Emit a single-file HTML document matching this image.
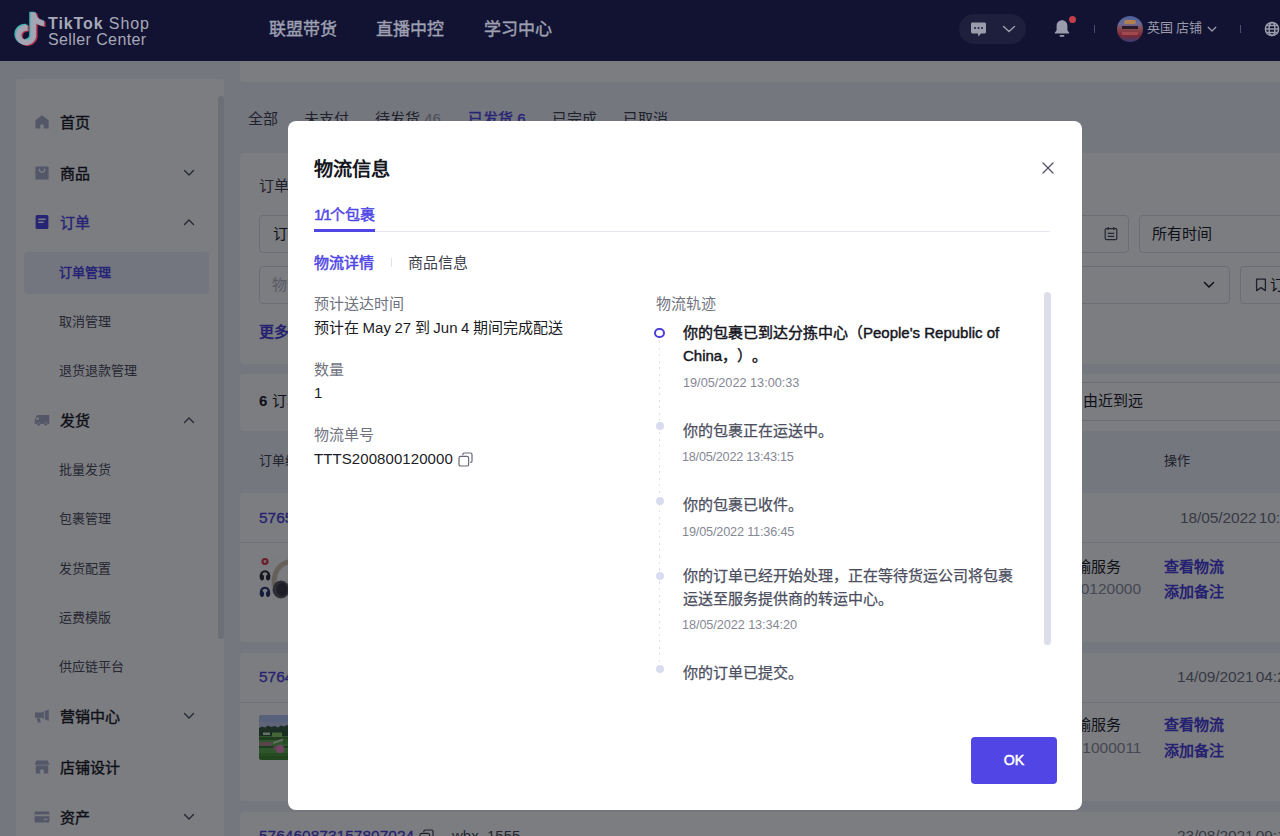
<!DOCTYPE html>
<html lang="zh-CN">
<head>
<meta charset="utf-8">
<title>TikTok Shop Seller Center</title>
<style>
*{box-sizing:border-box;margin:0;padding:0}
html,body{width:1280px;height:836px;overflow:hidden}
body{font-family:"Liberation Sans",sans-serif;background:#eceef6;color:#1b1c25;position:relative;-webkit-font-smoothing:antialiased}
.abs{position:absolute;white-space:nowrap}
#page{position:absolute;left:0;top:0;width:1280px;height:836px;overflow:hidden;background:#f0f2fb;text-spacing-trim:space-all}
/* header */
#hdr{position:absolute;left:0;top:0;width:1280px;height:61px;background:#121332;z-index:5}
#hdr .nav{position:absolute;top:17.5px;font-size:17px;line-height:24px;color:#9fa0b2;-webkit-text-stroke:0.4px #9fa0b2;white-space:nowrap}
.logotxt{position:absolute;left:48px;color:#a8a9b8;white-space:nowrap;font-size:16px;line-height:18px}
/* sidebar */
#side{position:absolute;left:16px;top:79px;width:208px;height:800px;background:#fff;border-radius:4px}
#side .sb{position:absolute;left:202px;top:17px;width:6px;height:543px;background:#dfe1e8;border-radius:3px}
.mi{margin-top:1px;position:absolute;left:44px;font-size:15px;line-height:20px;-webkit-text-stroke:0.4px currentColor;color:#1a1b25;white-space:nowrap}
.si{margin-top:.5px;position:absolute;left:43px;font-size:13px;line-height:18px;color:#4a4c59;white-space:nowrap}
.ico{position:absolute;left:18px;width:16px;height:16px}
#side .sel{position:absolute;left:8px;top:173px;width:185px;height:42px;background:#eef0fb;border-radius:4px}
.chev{position:absolute;left:167px;width:12px;height:8px}
/* main */
.card{position:absolute;background:#fff;border-radius:4px}
.tab{position:absolute;top:108px;font-size:15px;line-height:22px;color:#3e404d;white-space:nowrap}
.inp{position:absolute;border:1px solid #dcdee6;border-radius:4px;background:#fff;height:38px}
.lnk{color:#4a3fdb;font-weight:700}
/* overlay + modal */
#mask{z-index:3;position:absolute;left:0;top:0;width:1280px;height:836px;background:rgba(4,6,14,0.52)}
#modal{z-index:4;position:absolute;left:288px;top:121px;width:794px;height:689px;background:#fff;border-radius:8px;color:#1b1c25}
#modal .t{position:absolute;white-space:nowrap}
.g{color:#70737f}
.tl-t{position:absolute;left:395px;font-size:15px;line-height:22.5px;color:#4b4e5e;-webkit-text-stroke:0.25px #4b4e5e;white-space:nowrap}
.tl-d{position:absolute;left:394px;font-size:12.7px;line-height:16px;color:#858894;white-space:nowrap}
.dot{position:absolute;left:367.600px;margin-top:1px;width:8px;height:8px;border-radius:50%;background:#d9dbf0}
</style>
</head>
<body>
<div id="page">

<!-- HEADER -->
<div id="hdr">
  <svg class="abs" style="left:0;top:0" width="60" height="60" viewBox="0 0 60 60">
    <g transform="translate(13.650,12.500) scale(1.360)">
      <path d="M12.525.02c1.31-.02 2.61-.01 3.91-.02.08 1.53.63 3.09 1.75 4.170 1.120 1.110 2.700 1.620 4.240 1.790v4.030c-1.440-.05-2.890-.35-4.200-.97-.57-.26-1.100-.59-1.620-.93-.01 2.920.010 5.840-.02 8.750-.08 1.400-.54 2.790-1.350 3.940-1.310 1.920-3.580 3.170-5.910 3.210-1.430.08-2.860-.31-4.080-1.030-2.020-1.190-3.440-3.370-3.650-5.710-.02-.5-.03-1-.01-1.490.18-1.900 1.120-3.720 2.580-4.960 1.660-1.440 3.980-2.130 6.150-1.720.02 1.480-.04 2.960-.04 4.440-.99-.32-2.150-.23-3.020.37-.63.41-1.110 1.040-1.360 1.750-.21.51-.15 1.070-.14 1.610.24 1.640 1.820 3.020 3.500 2.870 1.120-.01 2.190-.66 2.770-1.610.19-.33.4-.67.41-1.060.1-1.790.06-3.570.07-5.360.01-4.030-.01-8.050.02-12.070z" fill="#3fb5b0" transform="translate(-1.050,-.6)"/>
      <path d="M12.525.02c1.31-.02 2.61-.01 3.91-.02.08 1.53.63 3.09 1.75 4.170 1.120 1.110 2.700 1.620 4.240 1.790v4.030c-1.440-.05-2.890-.35-4.200-.97-.57-.26-1.100-.59-1.620-.93-.01 2.920.010 5.840-.02 8.750-.08 1.400-.54 2.790-1.350 3.940-1.310 1.920-3.580 3.170-5.910 3.210-1.430.08-2.860-.31-4.080-1.030-2.020-1.190-3.440-3.370-3.650-5.710-.02-.5-.03-1-.01-1.490.18-1.900 1.120-3.720 2.580-4.960 1.660-1.440 3.980-2.130 6.150-1.720.02 1.480-.04 2.960-.04 4.440-.99-.32-2.150-.23-3.020.37-.63.41-1.110 1.040-1.360 1.750-.21.51-.15 1.070-.14 1.610.24 1.640 1.820 3.020 3.500 2.870 1.120-.01 2.190-.66 2.770-1.610.19-.33.4-.67.41-1.060.1-1.790.06-3.570.07-5.360.01-4.030-.01-8.050.02-12.070z" fill="#b8324c" transform="translate(1.050,.6)"/>
      <path d="M12.525.02c1.31-.02 2.61-.01 3.91-.02.08 1.53.63 3.09 1.75 4.170 1.120 1.110 2.700 1.620 4.240 1.790v4.030c-1.440-.05-2.890-.35-4.200-.97-.57-.26-1.100-.59-1.620-.93-.01 2.920.010 5.840-.02 8.750-.08 1.400-.54 2.790-1.350 3.940-1.310 1.920-3.580 3.170-5.910 3.210-1.430.08-2.860-.31-4.080-1.030-2.020-1.190-3.440-3.370-3.650-5.710-.02-.5-.03-1-.01-1.490.18-1.900 1.120-3.720 2.580-4.960 1.660-1.440 3.980-2.130 6.150-1.720.02 1.480-.04 2.960-.04 4.440-.99-.32-2.150-.23-3.020.37-.63.41-1.110 1.040-1.360 1.750-.21.51-.15 1.070-.14 1.610.24 1.640 1.820 3.020 3.500 2.870 1.120-.01 2.190-.66 2.770-1.610.19-.33.4-.67.41-1.060.1-1.790.06-3.570.07-5.360.01-4.030-.01-8.050.02-12.070z" fill="#a3a4b4"/>
    </g>
  </svg>
  <div class="logotxt" style="top:14.500px;letter-spacing:.9px"><b>TikTok</b> Shop</div>
  <div class="logotxt" style="top:30.500px;letter-spacing:.4px">Seller Center</div>
  <div class="nav" style="left:269px">联盟带货</div>
  <div class="nav" style="left:376px">直播中控</div>
  <div class="nav" style="left:484px">学习中心</div>
  <div class="abs" style="left:959px;top:14px;width:67px;height:30px;border-radius:15px;background:#1e1f3d"></div>
  <svg class="abs" style="left:970px;top:21px" width="17" height="17" viewBox="0 0 17 17"><path d="M2.400 1.500h12.200a1.400 1.400 0 0 1 1.400 1.400v8.200a1.400 1.400 0 0 1-1.400 1.400H11l-2.500 3-.6-3H2.400A1.400 1.400 0 0 1 1 11.100V2.900a1.400 1.400 0 0 1 1.400-1.400z" fill="#9a9bac"/><circle cx="5" cy="7" r="1" fill="#1e1f3d"/><circle cx="8.500" cy="7" r="1" fill="#1e1f3d"/><circle cx="12" cy="7" r="1" fill="#1e1f3d"/></svg>
  <svg class="abs" style="left:1001.500px;top:25px" width="14" height="8" viewBox="0 0 14 8"><path d="M1.500 1.500 7 6.500l5.500-5" fill="none" stroke="#9a9bac" stroke-width="1.500" stroke-linecap="round" stroke-linejoin="round"/></svg>
  <svg class="abs" style="left:1054px;top:19px" width="16" height="19" viewBox="0 0 16 19"><path d="M8 1.200c3.200 0 5.400 2.400 5.400 5.600v4.400l1.800 2.600v.8H.8v-.8l1.800-2.600V6.800C2.600 3.600 4.800 1.200 8 1.200z" fill="#9a9bac"/><rect x="5.600" y="16" width="4.800" height="1.800" rx=".9" fill="#9a9bac"/></svg>
  <div class="abs" style="left:1068.500px;top:15.500px;width:7px;height:7px;border-radius:50%;background:#c43e48"></div>
  <div class="abs" style="left:1094px;top:25px;width:1px;height:8px;background:#4a4c70"></div>
  <div class="abs" style="left:1117px;top:16px;width:26px;height:26px;border-radius:50%;background:linear-gradient(180deg,#4a5f9a 0%,#6a6a98 30%,#8a4a50 48%,#7a2a34 75%,#3a3c78 100%);overflow:hidden"><div class="abs" style="left:5px;top:10px;width:16px;height:3px;background:#2a1a2a"></div><div class="abs" style="left:5px;top:16px;width:16px;height:3px;background:#a04a50"></div><div class="abs" style="left:7px;top:4px;width:12px;height:4px;background:#b08050;border-radius:2px"></div></div>
  <div class="abs" style="left:1147px;top:19px;font-size:13px;line-height:18px;color:#9a9bac;word-spacing:-1px">英国 店铺</div>
  <svg class="abs" style="left:1207px;top:26px" width="10" height="7" viewBox="0 0 10 7"><path d="M1.200 1.200 5 5l3.800-3.800" fill="none" stroke="#9a9bac" stroke-width="1.300" stroke-linecap="round" stroke-linejoin="round"/></svg>
  <div class="abs" style="left:1240px;top:25px;width:1px;height:8px;background:#4a4c70"></div>
  <svg class="abs" style="left:1264px;top:21px" width="16" height="16" viewBox="0 0 16 16"><g fill="none" stroke="#9a9bac" stroke-width="1.500"><circle cx="8" cy="8" r="6.600"/><ellipse cx="8" cy="8" rx="2.900" ry="6.600"/><path d="M1.400 8h13.200M2.400 4.600h11.200M2.400 11.400h11.200"/></g></svg>
</div>

<!-- SIDEBAR -->
<div id="side">
  <div class="sb"></div>
  <div class="sel"></div>
  <!-- home -->
  <svg class="ico" style="top:35px" viewBox="0 0 16 16"><path d="M8 1.2 1.4 6.3V14.6h4.9V10.400h3.4V14.600h4.900V6.300z" fill="#a9afc9"/></svg>
  <div class="mi" style="top:33px">首页</div>
  <!-- products -->
  <svg class="ico" style="top:86px" viewBox="0 0 16 16"><path d="M2 1.500h12a.6.6 0 0 1 .6.6V14a.6.6 0 0 1-.6.6H2a.6.6 0 0 1-.6-.6V2.100a.6.600 0 0 1 .6-.6z" fill="#a9afc9"/><path d="M5.300 4.200c0 1.700 1.200 2.900 2.700 2.900s2.700-1.200 2.700-2.900" fill="none" stroke="#fff" stroke-width="1.300" stroke-linecap="round"/></svg>
  <div class="mi" style="top:84px">商品</div>
  <svg class="chev" style="top:90px" viewBox="0 0 12 8"><path d="M1.500 1.500 6 6l4.500-4.500" fill="none" stroke="#4a4d5c" stroke-width="1.400" stroke-linecap="round" stroke-linejoin="round"/></svg>
  <!-- orders -->
  <svg class="ico" style="top:135px" viewBox="0 0 16 16"><rect x="1.600" y="1" width="12.800" height="14" rx="1.600" fill="#4f46e5"/><path d="M4.800 5.200h6.400M4.800 8.200h4.400" stroke="#fff" stroke-width="1.400" stroke-linecap="round"/></svg>
  <div class="mi" style="top:133px;color:#4f46e5">订单</div>
  <svg class="chev" style="top:139px" viewBox="0 0 12 8"><path d="M1.500 6.500 6 2l4.500 4.500" fill="none" stroke="#4a4d5c" stroke-width="1.400" stroke-linecap="round" stroke-linejoin="round"/></svg>
  <div class="si" style="top:184px;color:#4f46e5;font-weight:700">订单管理</div>
  <div class="si" style="top:233px">取消管理</div>
  <div class="si" style="top:282px">退货退款管理</div>
  <!-- shipping -->
  <svg class="ico" style="top:333px" viewBox="0 0 16 16"><path d="M4.600 3h10.200a.5.500 0 0 1 .5.500V12h-1.700a1.900 1.900 0 0 0-3.700 0H6.500a1.900 1.900 0 0 0-3.700 0H.8V7.800L2.200 4.300A2 2 0 0 1 4.600 3z" fill="#a9afc9"/><circle cx="4.600" cy="12.300" r="1.400" fill="#a9afc9"/><circle cx="11.700" cy="12.300" r="1.400" fill="#a9afc9"/><path d="M2.400 5.500h2.400v2.200H1.600z" fill="#fff"/></svg>
  <div class="mi" style="top:331px">发货</div>
  <svg class="chev" style="top:337px" viewBox="0 0 12 8"><path d="M1.500 6.500 6 2l4.500 4.500" fill="none" stroke="#4a4d5c" stroke-width="1.400" stroke-linecap="round" stroke-linejoin="round"/></svg>
  <div class="si" style="top:381px">批量发货</div>
  <div class="si" style="top:430px">包裹管理</div>
  <div class="si" style="top:480px">发货配置</div>
  <div class="si" style="top:529px">运费模版</div>
  <div class="si" style="top:578px">供应链平台</div>
  <!-- marketing -->
  <svg class="ico" style="top:629px" viewBox="0 0 16 16"><path d="M1 4.600h6.200L14.800 1.500v11.400L7.200 9.800H1z" fill="#a9afc9"/><path d="M2.600 10.200h3.400l.8 4.300H3.900z" fill="#a9afc9"/><path d="M10.300 3.400v7.600" stroke="#fff" stroke-width="1"/></svg>
  <div class="mi" style="top:627px">营销中心</div>
  <svg class="chev" style="top:633px" viewBox="0 0 12 8"><path d="M1.500 1.500 6 6l4.500-4.500" fill="none" stroke="#4a4d5c" stroke-width="1.400" stroke-linecap="round" stroke-linejoin="round"/></svg>
  <!-- shop design -->
  <svg class="ico" style="top:680px" viewBox="0 0 16 16"><path d="M2.200 1.500h11.600l1.400 4.300H.8z" fill="#a9afc9"/><path d="M1.800 6.600h12.400v8H9.800V10.600H6.200v4H1.800z" fill="#a9afc9"/></svg>
  <div class="mi" style="top:678px">店铺设计</div>
  <!-- assets -->
  <svg class="ico" style="top:730px" viewBox="0 0 16 16"><rect x=".6" y="2.600" width="14.800" height="10.800" rx="1.200" fill="#a9afc9"/><rect x=".6" y="5.400" width="14.800" height="1.800" fill="#fff"/><rect x="9.800" y="9.800" width="3.600" height="1.400" fill="#fff"/></svg>
  <div class="mi" style="top:728px">资产</div>
  <svg class="chev" style="top:734px" viewBox="0 0 12 8"><path d="M1.500 1.500 6 6l4.500-4.500" fill="none" stroke="#4a4d5c" stroke-width="1.400" stroke-linecap="round" stroke-linejoin="round"/></svg>
</div>

<!-- MAIN -->
<div id="main">
  <div class="card" style="left:240px;top:50px;width:1060px;height:32px"></div>
  <div class="tab" style="left:248px">全部</div>
  <div class="tab" style="left:304px">未支付</div>
  <div class="tab" style="left:375px">待发货 <span style="color:#9a9dab">46</span></div>
  <div class="tab" style="left:468px;color:#4f46e5;-webkit-text-stroke:0.4px #4f46e5">已发货 6</div>
  <div class="tab" style="left:552px">已完成</div>
  <div class="tab" style="left:623px">已取消</div>

  <div class="card" style="left:240px;top:153px;width:1060px;height:211px"></div>
  <div class="abs" style="left:259px;top:175px;font-size:15px;line-height:22px;color:#3e404d">订单</div>
  <div class="inp" style="left:259px;top:215px;width:870px"></div>
  <div class="abs" style="left:273px;top:223px;font-size:15px;line-height:22px;color:#1b1c25">订单编号</div>
  <svg class="abs" style="left:1104px;top:226px" width="14" height="15" viewBox="0 0 14 15"><g fill="none" stroke="#4a4d5c" stroke-width="1.200"><rect x="1.200" y="2.600" width="11.600" height="11" rx="1.200"/><path d="M4.200 1v3M9.800 1v3M3.800 7.400h6.400M3.800 10.400h6.400"/></g></svg>
  <div class="inp" style="left:1139px;top:215px;width:160px"></div>
  <div class="abs" style="left:1152px;top:223px;font-size:15px;line-height:22px;color:#1b1c25">所有时间</div>
  <div class="inp" style="left:259px;top:266px;width:971px"></div>
  <div class="abs" style="left:272px;top:274px;font-size:15px;line-height:22px;color:#b4b7c4">物流单号</div>
  <svg class="abs" style="left:1203px;top:281px" width="12" height="8" viewBox="0 0 12 8"><path d="M1.500 1.500 6 6l4.500-4.500" fill="none" stroke="#1b1c25" stroke-width="1.500" stroke-linecap="round" stroke-linejoin="round"/></svg>
  <div class="inp" style="left:1240px;top:266px;width:60px"></div>
  <svg class="abs" style="left:1255px;top:278px" width="12" height="14" viewBox="0 0 12 14"><path d="M1.600 1.200h8.800v11.400L6 9.600l-4.400 3z" fill="none" stroke="#3e404d" stroke-width="1.300" stroke-linejoin="round"/></svg>
  <div class="abs" style="left:1270px;top:274px;font-size:15px;line-height:22px;color:#1b1c25">订单</div>
  <div class="abs lnk" style="left:259px;top:321px;font-size:15px;line-height:22px">更多筛选</div>

  <div class="card" style="left:240px;top:374px;width:1060px;height:57px"></div>
  <div class="abs" style="left:259px;top:390px;font-size:15px;line-height:22px;color:#1b1c25"><b>6</b> 订单</div>
  <div class="inp" style="left:960px;top:382px;width:340px;height:39px"></div>
  <div class="abs" style="left:1083px;top:390px;font-size:15px;line-height:22px;color:#1b1c25">由近到远</div>

  <div class="abs" style="left:259px;top:452px;font-size:13px;line-height:18px;color:#3e404d">订单编号</div>
  <div class="abs" style="left:1164px;top:452px;font-size:13px;line-height:18px;color:#3e404d">操作</div>

  <!-- order 1 -->
  <div class="card" style="left:240px;top:493px;width:1060px;height:149px"></div>
  <div class="abs" style="left:240px;top:542px;width:1060px;height:1px;background:#e6e8ef"></div>
  <div class="abs lnk" style="left:259px;top:507px;font-size:15.500px;line-height:22px;font-weight:400;-webkit-text-stroke:0.3px #4a3fdb">576546087315780</div>
  <div class="abs" style="left:1180px;top:506.500px;font-size:15.500px;line-height:22px;color:#70737f;word-spacing:-2px;letter-spacing:-.1px">18/05/2022 10:30:25</div>
  <svg class="abs" style="left:259px;top:556px" width="44" height="44" viewBox="0 0 44 44">
    <rect width="44" height="44" fill="#fdfdfd"/>
    <circle cx="6" cy="5.500" r="3.600" fill="#e23a4a"/><circle cx="6" cy="5.500" r="1.400" fill="#fbdada"/>
    <path d="M1.800 22c-1.200-9 9.600-9 8.400 0" fill="none" stroke="#2a2a30" stroke-width="2.200"/><ellipse cx="3" cy="21.500" rx="2" ry="3" fill="#2a2a30"/><ellipse cx="9" cy="21.500" rx="2" ry="3" fill="#2a2a30"/>
    <path d="M1.800 38.500c-1.200-9 9.600-9 8.400 0" fill="none" stroke="#27306e" stroke-width="2.200"/><ellipse cx="3" cy="38" rx="2" ry="3" fill="#27306e"/><ellipse cx="9" cy="38" rx="2" ry="3" fill="#27306e"/>
    <path d="M15 30C14 10 26 4 40 5" fill="none" stroke="#cfc4ad" stroke-width="5"/>
    <ellipse cx="22" cy="33.500" rx="8.500" ry="9" fill="#5a5a60"/><ellipse cx="23" cy="33.500" rx="5.500" ry="6.500" fill="#3c3c42"/>
    <ellipse cx="38" cy="33" rx="8" ry="9" fill="#4a4a50"/>
  </svg>
  <div class="abs" style="left:1031px;top:555.500px;font-size:15px;line-height:22px;color:#1b1c25">标准运输服务</div>
  <div class="abs" style="left:941px;width:200px;text-align:right;top:577.500px;font-size:15.500px;line-height:22px;color:#8d909d">TTTS200800120000</div>
  <div class="abs lnk" style="left:1164px;top:556px;font-size:15px;line-height:22px">查看物流</div>
  <div class="abs lnk" style="left:1164px;top:581px;font-size:15px;line-height:22px">添加备注</div>

  <!-- order 2 -->
  <div class="card" style="left:240px;top:653px;width:1060px;height:148px"></div>
  <div class="abs" style="left:240px;top:702px;width:1060px;height:1px;background:#e6e8ef"></div>
  <div class="abs lnk" style="left:259px;top:666px;font-size:15.500px;line-height:22px;font-weight:400;-webkit-text-stroke:0.3px #4a3fdb">576460873157807</div>
  <div class="abs" style="left:1177px;top:665.500px;font-size:15.500px;line-height:22px;color:#70737f;word-spacing:-2px;letter-spacing:-.1px">14/09/2021 04:21:10</div>
  <svg class="abs" style="left:259px;top:715px;border-radius:3px" width="45" height="45" viewBox="0 0 45 45">
        <rect width="45" height="45" fill="#5fae4a"/>
    <rect width="45" height="13" fill="#b3c4f2"/><rect y="7" width="45" height="6" fill="#c2cbef"/>
    <path d="M0 13l3-1.500 3 1 3-2 3 1.500 4-1 3 1.500 3-2 3 1 3-1.500 4 1.500 3-1 3 1 4-1.500V18H0z" fill="#3a5a40"/>
    <rect y="16" width="45" height="5" fill="#2f5a30"/>
    <rect x="13" y="17.500" width="10" height="4.500" fill="#8fce6a"/>
    <rect x="4" y="17.500" width="7" height="2.500" fill="#d8e8d0"/>
    <rect y="22" width="45" height="3" fill="#3f7a38"/>
    <path d="M14 27l10-3.500v2L14 29z" fill="#d0e0c8"/>
    <rect y="27" width="13" height="4" fill="#b48a90"/><rect y="31" width="45" height="2" fill="#3a7a34"/>
    <rect x="24" y="24" width="21" height="5" fill="#4f9a40"/>
    <circle cx="21" cy="34" r="4.300" fill="#e68ac0"/><circle cx="16.500" cy="33" r="2" fill="#d878b0"/>
    <rect y="38" width="45" height="7" fill="#4a9a3c"/><rect y="41" width="45" height="4" fill="#3f8a34"/>
  </svg>
  <div class="abs" style="left:1031px;top:714px;font-size:15px;line-height:22px;color:#1b1c25">标准运输服务</div>
  <div class="abs" style="left:941px;width:200.500px;text-align:right;top:736.500px;font-size:15.500px;line-height:22px;color:#8d909d">TTTS200831000011</div>
  <div class="abs lnk" style="left:1164px;top:714px;font-size:15px;line-height:22px">查看物流</div>
  <div class="abs lnk" style="left:1164px;top:740px;font-size:15px;line-height:22px">添加备注</div>

  <!-- order 3 -->
  <div class="card" style="left:240px;top:812px;width:1060px;height:148px"></div>
  <div class="abs lnk" style="left:259px;top:825px;font-size:15.500px;line-height:22px;font-weight:400;-webkit-text-stroke:0.3px #4a3fdb">576460873157807024</div>
  <svg class="abs" style="left:419px;top:829px" width="15" height="15" viewBox="0 0 15 15"><g fill="none" stroke="#3e404d" stroke-width="1.200"><rect x="1" y="4.400" width="9.600" height="9.600" rx="1.600"/><path d="M4.800 2.700V2.600A1.600 1.600 0 0 1 6.400 1h6A1.600 1.600 0 0 1 14 2.600v6.300a1.600 1.600 0 0 1-1.300 1.550" stroke-linecap="round"/></g></svg>
  <div class="abs" style="left:452px;top:825px;font-size:15px;line-height:22px;color:#4a4d5c">wbx_1555</div>
  <div class="abs" style="left:1177px;top:825px;font-size:15.500px;line-height:22px;color:#70737f;word-spacing:-2px;letter-spacing:-.1px">23/08/2021 09:12:40</div>
</div>

<div id="mask"></div>

<!-- MODAL -->
<div id="modal">
  <div class="t" style="left:26px;top:34.500px;font-size:19.200px;line-height:28px;font-weight:700;color:#15161e">物流信息</div>
  <svg class="abs" style="left:753px;top:40px" width="14" height="14" viewBox="0 0 14 14"><path d="M2 2l10 10M12 2L2 12" stroke="#505365" stroke-width="1.250" stroke-linecap="round"/></svg>
  <div class="t" style="left:26px;top:82.500px;font-size:15px;line-height:22px;color:#4f46e5;-webkit-text-stroke:0.45px #4f46e5"><span style="letter-spacing:-1.600px">1/1</span>个包裹</div>
  <div class="abs" style="left:26px;top:110px;width:736px;height:1px;background:#e6e8ef"></div>
  <div class="abs" style="left:26px;top:108px;width:61px;height:2.500px;background:#4f46e5"></div>
  <div class="t" style="left:26px;top:130.500px;font-size:15px;line-height:22px;color:#4f46e5;-webkit-text-stroke:0.5px #4f46e5">物流详情</div>
  <div class="abs" style="left:103px;top:137px;width:1px;height:9px;background:#dfe1e8"></div>
  <div class="t" style="left:120px;top:130.500px;font-size:15px;line-height:22px;color:#3e404d">商品信息</div>

  <div class="t g" style="left:26px;top:171.500px;font-size:15px;line-height:22px">预计送达时间</div>
  <div class="t" style="left:26px;top:196px;font-size:15px;line-height:22px;word-spacing:-.6px">预计在 May 27 到 Jun 4 期间完成配送</div>
  <div class="t g" style="left:26px;top:237.500px;font-size:15px;line-height:22px">数量</div>
  <div class="t" style="left:26px;top:261px;font-size:15px;line-height:22px">1</div>
  <div class="t g" style="left:26px;top:302.500px;font-size:15px;line-height:22px">物流单号</div>
  <div class="t" style="left:26px;top:326.500px;font-size:15px;line-height:22px;letter-spacing:.08px">TTTS200800120000</div>
  <svg class="abs" style="left:170px;top:331px" width="15" height="15" viewBox="0 0 15 15"><g fill="none" stroke="#666978" stroke-width="1.200"><rect x="1" y="4.400" width="9.600" height="9.600" rx="1.600"/><path d="M4.800 2.700V2.600A1.600 1.600 0 0 1 6.400 1h6A1.600 1.600 0 0 1 14 2.600v6.300a1.600 1.600 0 0 1-1.300 1.550" stroke-linecap="round"/></g></svg>

  <div class="t g" style="left:368px;top:171.500px;font-size:15px;line-height:22px">物流轨迹</div>
  <div class="abs" style="left:370.700px;top:220px;width:1.800px;height:324px;background:repeating-linear-gradient(180deg,#dddff0 0,#dddff0 2px,transparent 2px,transparent 6.500px)"></div>
  <div class="abs" style="left:366.400px;top:207px;width:10.400px;height:10.400px;border-radius:50%;border:2.400px solid #4f3fd6;background:#fff"></div>
  <div class="tl-t" style="top:200.500px;color:#15161e;-webkit-text-stroke:0.45px #15161e">你的包裹已到达分拣中心（People's Republic of</div>
  <div class="tl-t" style="top:223.500px;color:#15161e;-webkit-text-stroke:0.45px #15161e">China，）。</div>
  <div class="tl-d" style="top:253.500px;left:395px">19/05/2022 13:00:33</div>

  <div class="dot" style="top:300px"></div>
  <div class="tl-t" style="top:298.500px">你的包裹正在运送中。</div>
  <div class="tl-d" style="top:327.500px;letter-spacing:-.25px">18/05/2022 13:43:15</div>

  <div class="dot" style="top:375px"></div>
  <div class="tl-t" style="top:373px">你的包裹已收件。</div>
  <div class="tl-d" style="top:402.500px;letter-spacing:-.17px">19/05/2022 11:36:45</div>

  <div class="dot" style="top:450px"></div>
  <div class="tl-t" style="top:444px">你的订单已经开始处理，正在等待货运公司将包裹</div>
  <div class="tl-t" style="top:466.500px">运送至服务提供商的转运中心。</div>
  <div class="tl-d" style="top:496px;letter-spacing:-.08px">18/05/2022 13:34:20</div>

  <div class="dot" style="top:543px"></div>
  <div class="tl-t" style="top:541px">你的订单已提交。</div>

  <div class="abs" style="left:755.500px;top:171px;width:7px;height:353px;border-radius:3.500px;background:#dcdfe9"></div>
  <div class="abs" style="left:683px;top:616px;width:86px;height:47px;border-radius:4px;background:#5145e5;color:#fff;font-size:14.200px;-webkit-text-stroke:0.5px #fff;line-height:47px;text-align:center">OK</div>
</div>

</div>
</body>
</html>
